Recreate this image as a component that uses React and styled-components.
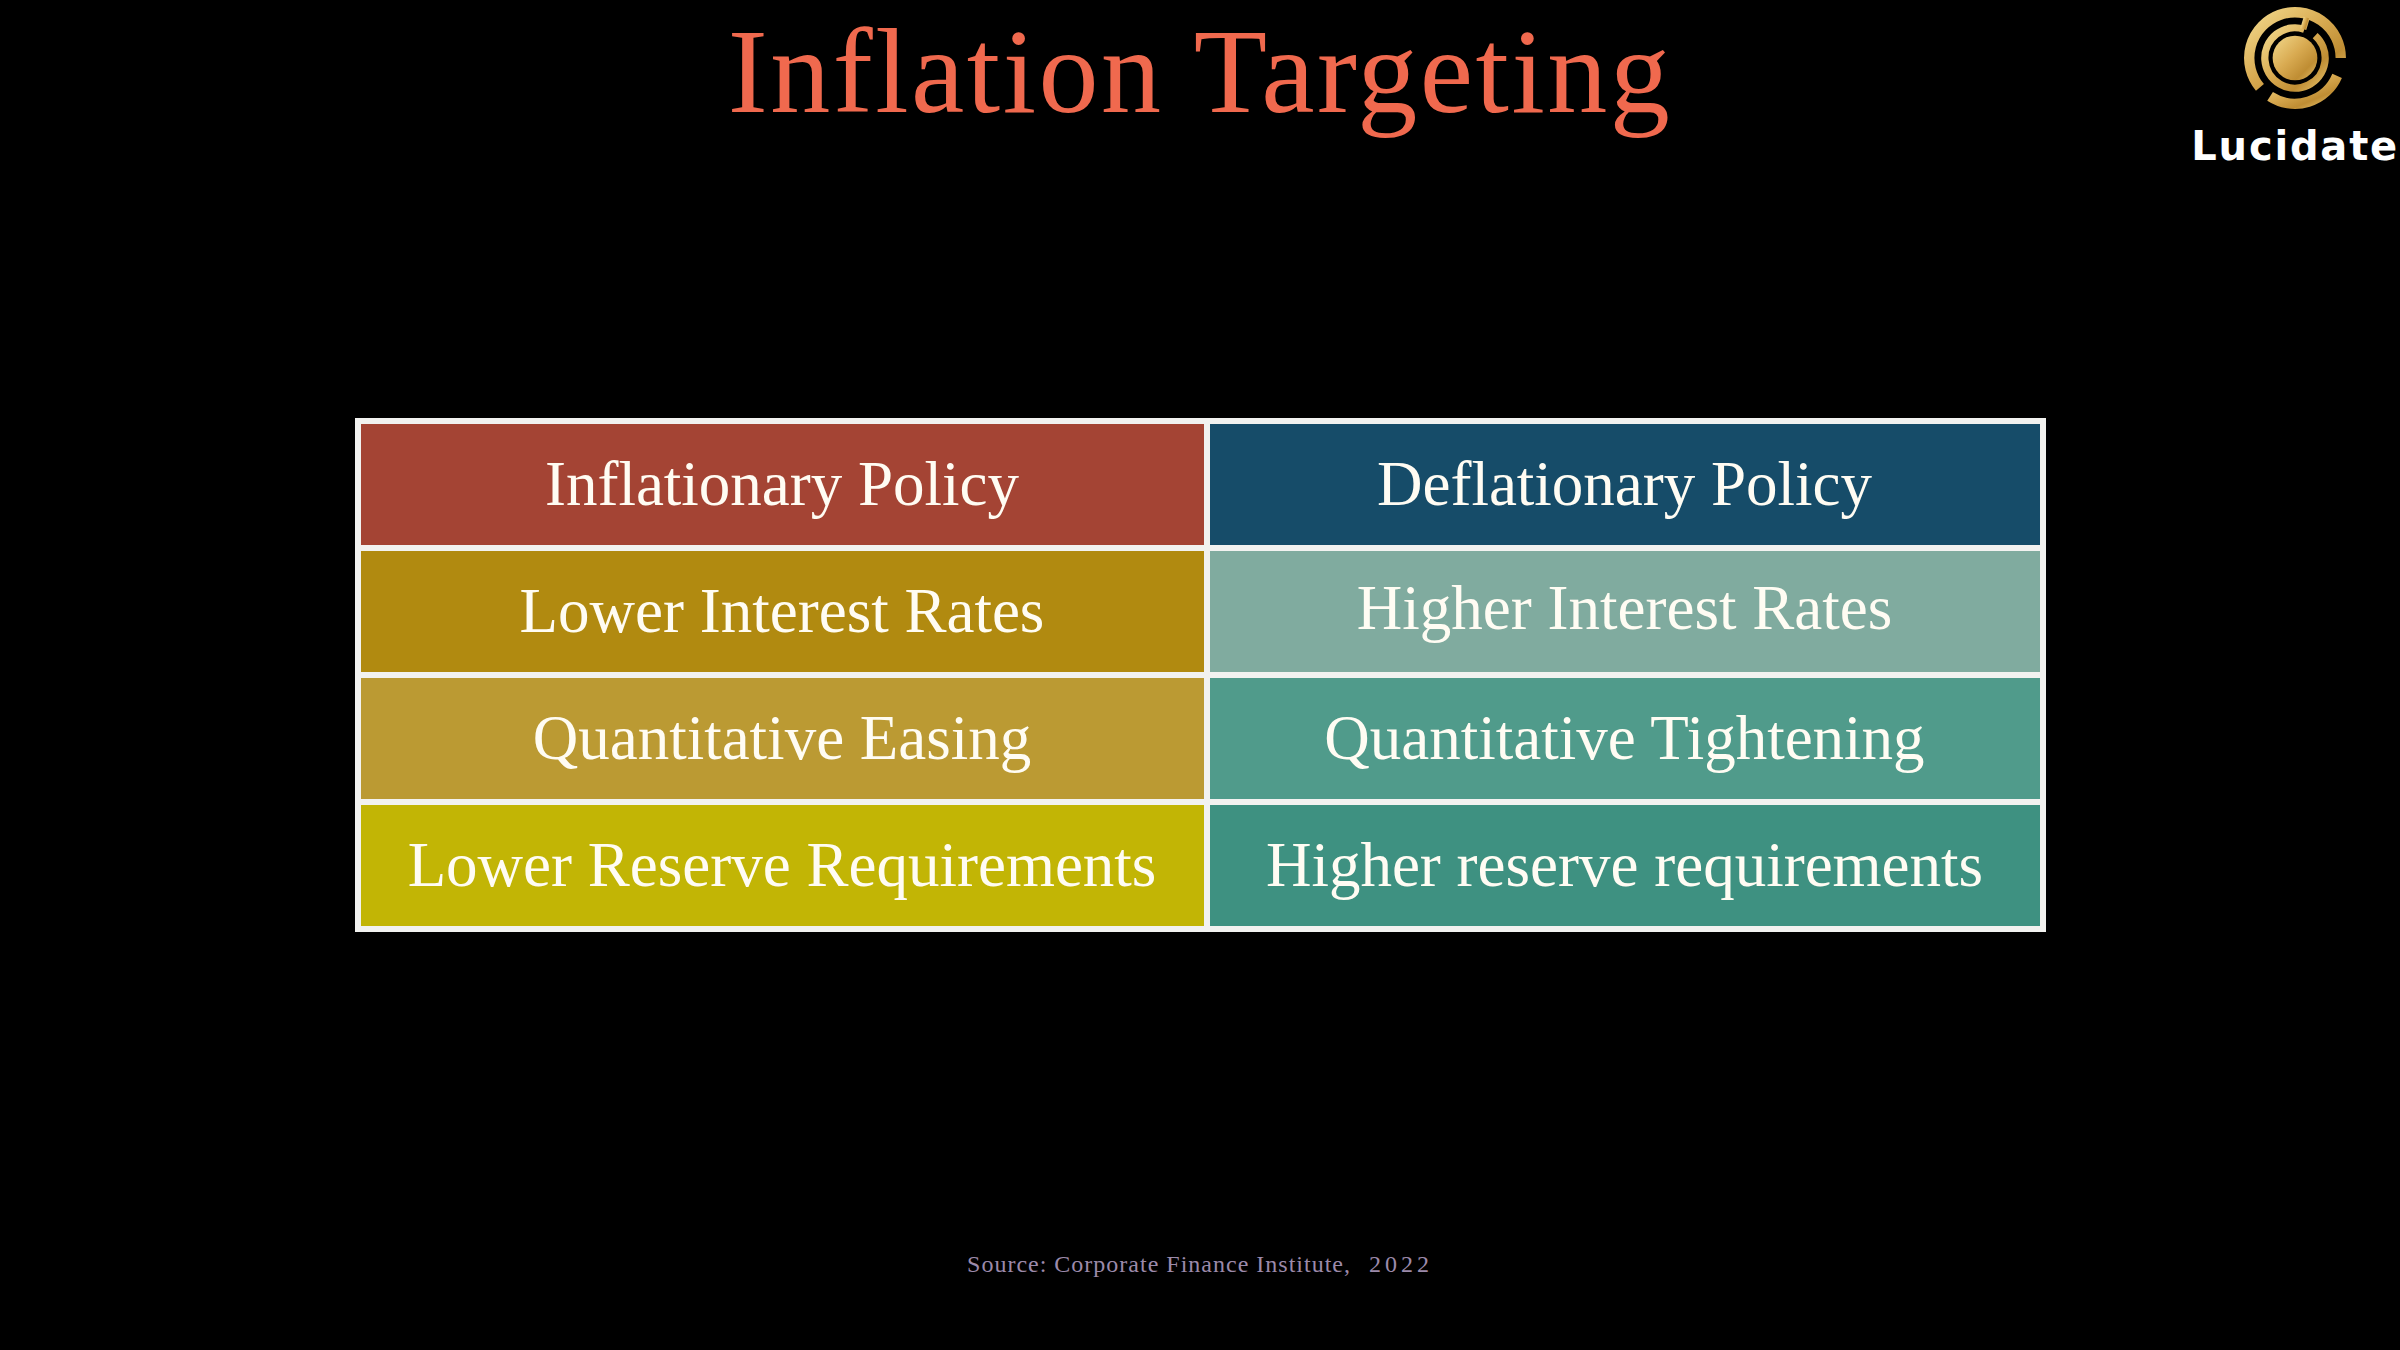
import React from "react";
import styled, { createGlobalStyle } from "styled-components";

const GlobalStyle = createGlobalStyle`
  html, body {
    margin: 0;
    padding: 0;
    background: #000;
  }
`;

const Slide = styled.div`
  width: 2400px;
  height: 1350px;
  background: #000;
  display: flex;
  flex-direction: column;
  overflow: hidden;
`;

const Header = styled.header`
  height: 160px;
  display: grid;
  grid-template-columns: 1fr auto 1fr;
  align-items: start;
`;

const Title = styled.h1`
  grid-column: 2;
  margin: 0;
  padding-top: 12px;
  font-family: "Liberation Serif", "Times New Roman", serif;
  font-weight: 400;
  font-size: 120px;
  line-height: 120px;
  letter-spacing: 2.5px;
  color: #f0694e;
  white-space: nowrap;
`;

const Logo = styled.div`
  grid-column: 3;
  justify-self: end;
  padding-top: 6px;
  padding-right: 1px;
  display: flex;
  flex-direction: column;
  align-items: center;
`;

const LogoName = styled.div`
  margin-top: 16px;
  font-family: "DejaVu Sans", "Noto Sans", sans-serif;
  font-weight: 700;
  font-size: 40px;
  line-height: 40px;
  letter-spacing: 1.8px;
  color: #fff;
`;

const Table = styled.div`
  margin: 258px auto 0;
  display: grid;
  grid-template-columns: 843px 830px;
  grid-auto-rows: 121px;
  gap: 6px;
  padding: 6px;
  background: #f2f2f0;
`;

const Cell = styled.div`
  background: ${(p) => p.$bg};
  display: flex;
  align-items: center;
  justify-content: center;
  padding-bottom: ${(p) => p.$lift || 0}px;
  font-family: "Liberation Serif", "Times New Roman", serif;
  font-size: 63px;
  line-height: 1;
  color: #fffcf3;
  white-space: nowrap;
`;

const Source = styled.p`
  margin: 320px 0 0;
  text-align: center;
  font-family: "Liberation Serif", "Times New Roman", serif;
  font-size: 24px;
  line-height: 24px;
  letter-spacing: 1px;
  color: #9c8aaa;
`;

const Year = styled.span`
  margin-left: 18px;
  letter-spacing: 4px;
`;

const rows = [
  ["Inflationary Policy", "#a44434", "Deflationary Policy", "#164c69"],
  ["Lower Interest Rates", "#b18a10", "Higher Interest Rates", "#80ab9f"],
  ["Quantitative Easing", "#bb9a33", "Quantitative Tightening", "#509b8b"],
  ["Lower Reserve Requirements", "#c2b505", "Higher reserve requirements", "#3e9181"],
];

const arc = (r, a0, a1) => {
  const p = (a) => [
    50 + r * Math.sin((a * Math.PI) / 180),
    50 - r * Math.cos((a * Math.PI) / 180),
  ];
  const [x0, y0] = p(a0);
  const [x1, y1] = p(a1);
  const large = a1 - a0 > 180 ? 1 : 0;
  return `M${x0.toFixed(2)} ${y0.toFixed(2)} A${r} ${r} 0 ${large} 1 ${x1.toFixed(2)} ${y1.toFixed(2)}`;
};

const LucidateMark = () => (
  <svg width="104" height="104" viewBox="0 0 100 100">
    <defs>
      <linearGradient id="gold" x1="0" y1="0" x2="1" y2="1">
        <stop offset="0" stopColor="#f2d98c" />
        <stop offset="0.45" stopColor="#d9ab52" />
        <stop offset="0.75" stopColor="#bf8d33" />
        <stop offset="1" stopColor="#e6c16c" />
      </linearGradient>
    </defs>
    <g fill="none" stroke="url(#gold)">
      <path d={arc(44, 230, 450)} strokeWidth="10" />
      <path d={arc(44, 113, 213)} strokeWidth="10" />
      <path d={arc(29, 42, 378)} strokeWidth="7" />
      <line x1="57.9" y1="22.2" x2="61.3" y2="11.2" strokeWidth="6" />
    </g>
    <circle cx="50" cy="50" r="21.5" fill="url(#gold)" />
  </svg>
);

export default function App() {
  return (
    <>
      <GlobalStyle />
      <Slide>
        <Header>
          <Title>Inflation Targeting</Title>
          <Logo>
            <LucidateMark />
            <LogoName>Lucidate</LogoName>
          </Logo>
        </Header>
        <Table>
          {rows.map(([left, leftBg, right, rightBg], i) => (
            <React.Fragment key={left}>
              <Cell $bg={leftBg}>{left}</Cell>
              <Cell $bg={rightBg} $lift={i === 1 ? 6 : 0}>
                {right}
              </Cell>
            </React.Fragment>
          ))}
        </Table>
        <Source>
          Source: Corporate Finance Institute,<Year>2022</Year>
        </Source>
      </Slide>
    </>
  );
}
